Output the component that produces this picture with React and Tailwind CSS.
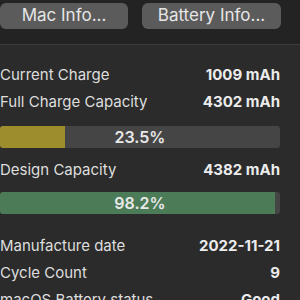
import React from "react"

const Row = ({ label, value, className = "" }) => (
  <div className={`flex items-center justify-between h-[27px] ${className}`}>
    <span className="text-[#dedede]">{label}</span>
    <span className="font-bold text-[#ececec]">{value}</span>
  </div>
)

const Bar = ({ pct, fill, fillWidth, className = "" }) => (
  <div className={`relative h-[22px] rounded-[3px] bg-[#454545] overflow-hidden ${className}`}>
    <div className={`absolute left-0 top-0 bottom-0 ${fill} ${fillWidth}`} />
    <div className="relative flex h-full items-center justify-center text-[16px] text-[#e8e8e8] font-semibold">{pct}</div>
  </div>
)

export default function App() {
  return (
    <div className="w-[300px] h-[300px] overflow-hidden bg-[#2b2b2b] text-[15px] font-['Inter',sans-serif]">
      {/* top toolbar */}
      <div className="h-[45px] bg-[#232323] border-b border-[#3b3b3b] flex items-start pt-[3px]">
        <button className="w-[128px] h-[26px] rounded-[6px] bg-[#5b5b5b] text-[#e6e6e6] text-[17px]">
          Mac Info...
        </button>
        <button className="ml-[14px] w-[139px] h-[26px] rounded-[6px] bg-[#5b5b5b] text-[#e6e6e6] text-[17px]">
          Battery Info...
        </button>
      </div>

      {/* battery details */}
      <div className="w-[280px] pt-[17px]">
        <Row label="Current Charge" value="1009 mAh" />
        <Row label="Full Charge Capacity" value="4302 mAh" />
        <Bar className="mt-[10px]" pct="23.5%" fill="bg-[#9e8d2d]" fillWidth="w-[65px]" />
        <Row className="mt-[9px]" label="Design Capacity" value="4382 mAh" />
        <Bar className="mt-[8px]" pct="98.2%" fill="bg-[#4b7c57]" fillWidth="w-[275px]" />
        <Row className="mt-[19px] h-[26px]" label="Manufacture date" value="2022-11-21" />
        <Row className="h-[26px]" label="Cycle Count" value="9" />
        <Row className="h-[26px]" label="macOS Battery status" value="Good" />
      </div>
    </div>
  )
}
